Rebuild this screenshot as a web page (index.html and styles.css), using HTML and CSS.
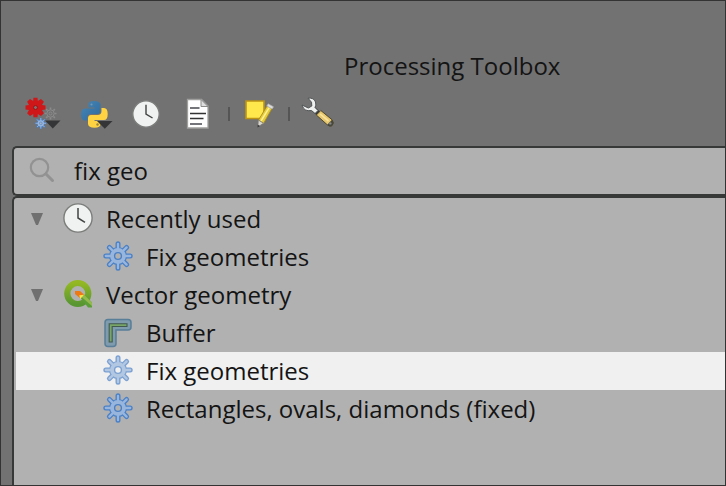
FILE: index.html
```html
<!DOCTYPE html>
<html lang="en">
<head>
<meta charset="utf-8">
<title>Processing Toolbox</title>
<link rel="stylesheet" href="styles.css">
</head>
<body>
<svg class="defs" aria-hidden="true">
  <defs>
    <linearGradient id="qgreen" x1="0" y1="0" x2="0" y2="1"><stop offset="0" stop-color="#93b823"/><stop offset="1" stop-color="#589632"/></linearGradient>
    <linearGradient id="pyblue" x1="0" y1="0" x2="1" y2="1"><stop offset="0" stop-color="#4687b8"/><stop offset="1" stop-color="#30699b"/></linearGradient>
    <path id="teeth" d="M0-12.2V12.2M-12.2 0H12.2M-8.6-8.6L8.6 8.6M-8.6 8.6L8.6-8.6"/>
    <symbol id="gear" viewBox="-15 -15 30 30">
      <g fill="none" stroke-linecap="round">
        <use href="#teeth" stroke="#4b80c6" stroke-width="5"/>
        <circle r="9.1" fill="#4b80c6"/>
        <use href="#teeth" stroke="#98b6dd" stroke-width="2.3"/>
      </g>
      <circle r="7.9" fill="#98b6dd"/>
      <circle r="3.4" fill="currentColor" stroke="#4b80c6" stroke-width="1.4"/>
    </symbol>
    <symbol id="clock" viewBox="0 0 30 30">
      <circle cx="15" cy="15" r="14.1" fill="#f0f2f1" stroke="#7b7d7b" stroke-width="1.4"/>
      <path d="M15 5V15L22 19.3" fill="none" stroke="#414443" stroke-width="1.5"/>
    </symbol>
  </defs>
</svg>
<main class="panel">
  <h1 class="title">Processing Toolbox</h1>
  <div class="toolbar">
    <svg class="models" viewBox="0 0 36 34">
      <g transform="translate(10.5 10.5)">
        <path d="M-2-9.8H2L2.3-6.5L5.5-8.6L8.4-5.7L6.5-2.5L10-2V2L6.5 2.5L8.4 5.7L5.5 8.6L2.3 6.5L2 9.8H-2L-2.3 6.5L-5.5 8.6L-8.4 5.7L-6.5 2.5L-10 2V-2L-6.5-2.5L-8.4-5.7L-5.5-8.6L-2.3-6.5Z" fill="#cf1619"/>
        <circle r="2" fill="#82706f" stroke="#a30f12"/>
      </g>
      <g transform="translate(25.5 16.5)" fill="none" stroke="#8b8b8b">
        <path d="M0-6V-4M0 4V6M-6 0H-4M4 0H6M-4.4-4.4L-3-3M3 3L4.4 4.4M-4.4 4.4L-3 3M3-3L4.4-4.4" stroke-width="1.6"/>
        <circle r="3.7"/><circle r="1.5"/>
      </g>
      <g transform="translate(15.8 26.3) scale(.4)"><use href="#gear" x="-15" y="-15" width="30" height="30"/></g>
      <path d="M20 23.5H35.5L27.8 31.5Z" fill="#343536"/>
    </svg>
    <svg class="python" viewBox="0 0 34 34">
      <path d="M8.5 8V4Q8.5 1 14 1T20.5 4V11Q20.5 14 17.5 14H11Q7.5 14 7.5 17.5V20.5H5Q1 20.5 1 14.5Q1 8.5 5 8.5H14.5V7.5H8.5Z" fill="url(#pyblue)"/>
      <circle cx="11.5" cy="4.5" r="1.1" fill="#7498b5"/>
      <path d="M20.5 21V24Q20.5 27.8 14.5 27.8T8 24V18.5Q8 15 11 15H17.5Q21.5 15 21.5 11V8H24Q27.7 8 27.7 14Q27.7 20 24 20H14.5V21Z" fill="#ffd342"/>
      <circle cx="17.5" cy="24.5" r="1.2" fill="#9b8540"/>
      <path d="M17 21H32.5L24.8 28.7Z" fill="#343536"/>
    </svg>
    <svg class="history"><use href="#clock"/></svg>
    <svg class="document" viewBox="0 0 24 32">
      <path d="M1.5 1.5H15.5L22 8V30H1.5Z" fill="#fff" stroke="#a0a19f" stroke-width="1.3"/>
      <path d="M15 1.5V8.5H22Z" fill="#ddd" stroke="#8b8c8a"/>
      <path d="M4 10H13.5M4 26H16" stroke="#73757a" stroke-width="2"/>
      <path d="M4 15.5H20M4 20.5H17.5" stroke="#333" stroke-width="1.4"/>
    </svg>
    <i class="separator"></i>
    <svg class="edit" viewBox="0 0 30 32">
      <path d="M2 3H20V20.5H2Z" fill="#fee84c" stroke="#bd9414" stroke-width="1.6"/>
      <path d="M14.5 22L23 8L28 10.5L19.5 25.5Z" fill="#e5cc3c" stroke="#a88a22" stroke-width=".9"/>
      <path d="M17 23L25.5 9.2" stroke="#fff195" stroke-width="1.5"/>
      <path d="M14.3 22L19.5 25.2L13.9 29Z" fill="#d8d5cb" stroke="#777" stroke-width=".7"/>
      <path d="M13.5 29.5L13.7 26.7L16 28Z" fill="#333"/>
      <path d="M22.8 8L24.2 5.8L29.5 8.8L28.1 11Z" fill="#ddd" stroke="#aaa" stroke-width=".7"/>
    </svg>
    <i class="separator second"></i>
    <svg class="wrench" viewBox="0 0 34 32">
      <path d="M12.5 12L18 17" stroke="#34383a" stroke-width="5"/>
      <path d="M7 1.2Q13 .5 14.5 5Q15.5 8.5 14 10.5L17 13.5L14 16.5L10.5 13.5Q3 15 1 8L7.3 11L10.8 9L10.5 5.2Z" fill="#eef0f0" stroke="#505354" stroke-width="1"/>
      <path d="M15.3 18L19.8 13.5L31 22.7Q34 26 31 28.8Q29 30.2 26.5 28Z" fill="#e8c86e" stroke="#4e4832" stroke-width="1"/>
      <path d="M19 16.8L27.5 24" stroke="#f8e39d" stroke-width="1.7"/>
      <path d="M26.2 27.8L31 22.7Q34 26 31 28.8Q29 30.2 26.2 27.8Z" fill="#46483e"/>
      <circle cx="29.3" cy="26.4" r="1.2" fill="#888"/>
    </svg>
  </div>
  <div class="search">
    <svg class="lens" viewBox="0 0 26 26"><circle cx="10.5" cy="10.5" r="8.7"/><path d="M17 17L23.5 23.5"/></svg>
    <span>fix geo</span>
  </div>
  <div class="tree">
    <div class="row group"><i class="arrow"></i><svg class="icon"><use href="#clock"/></svg><span>Recently used</span></div>
    <div class="row"><svg class="icon gear"><use href="#gear"/></svg><span>Fix geometries</span></div>
    <div class="row group"><i class="arrow"></i>
      <svg class="icon" viewBox="0 0 30 30">
        <circle cx="14.8" cy="14.5" r="10.5" fill="none" stroke="url(#qgreen)" stroke-width="6.2"/>
        <path d="M17 18L21 15.5L29 23.5V28.5H25Z" fill="#5b9e37"/>
        <path d="M18 17.5L21 15.5L29 23.5V27Z" fill="#94b94d"/>
        <path d="M12 12H17L21 15.5L17 19L12 15Z" fill="#ee7913"/>
        <path d="M16.3 16.2L21 15.7L17.3 20Z" fill="#f6e64b"/>
      </svg><span>Vector geometry</span></div>
    <div class="row"><svg class="icon buffer" viewBox="0 0 30 30" fill="none">
        <path d="M8 1.5H25Q28 1.5 28 4.5V9Q28 12 25 12H13V25.5Q13 28.5 10 28.5H5Q2 28.5 2 25.5V4.5Q2 1.5 5 1.5Z" fill="#7f9bae" stroke="#587e98" stroke-width="1.5"/>
        <path d="M6.2 24V5.8H24V8.5H9.2V24Z" fill="#78a568" stroke="#425950" stroke-width="1.1"/>
      </svg><span>Buffer</span></div>
    <div class="row selected"><svg class="icon gear"><use href="#gear"/></svg><span>Fix geometries</span></div>
    <div class="row"><svg class="icon gear"><use href="#gear"/></svg><span>Rectangles, ovals, diamonds (fixed)</span></div>
  </div>
</main>
</body>
</html>
```

FILE: styles.css
```css
* { box-sizing: border-box; }
body { margin: 0; overflow: hidden; }
.defs { position: absolute; width: 0; height: 0; }
.panel {
  display: flex; flex-direction: column;
  width: 726px; height: 486px; overflow: hidden;
  padding: 49px 0 0 11px;
  border: 1px solid #333;
  background: #727272; color: #141414;
  font: 24px/34px "Open Sans", "Noto Sans", sans-serif;
}
.title { height: 34px; margin: 0 0 0 332px; font: inherit; line-height: 32px; white-space: nowrap; }
.toolbar { display: flex; height: 62px; padding: 12px 0 0 13px; align-items: flex-start; }
.toolbar svg { flex: none; margin-top: 1px; }
.models { width: 36px; height: 34px; color: #a5b2c2; }
.python { width: 34px; height: 34px; margin-left: 19px; }
.toolbar .python { margin-top: 4px; }
.history { width: 28px; height: 28px; margin-left: 18px; }
.toolbar .history { margin-top: 4px; }
.document { width: 24px; height: 32px; margin-left: 26px; }
.toolbar .document { margin-top: 2px; }
.separator { flex: none; width: 2px; height: 14px; margin: 11px 0 0 18px; background: #555; }
.edit { width: 30px; height: 32px; margin-left: 14px; }
.toolbar .edit { margin-top: 2px; }
.separator.second { margin-left: 14px; }
.wrench { width: 34px; height: 32px; margin-left: 11px; }
.search {
  display: flex; flex: none; align-items: center; height: 50px;
  padding-left: 16px; border: 2px solid #373838; border-right: 0;
  border-radius: 5px 0 0 5px; background: #b1b1b1;
}
.lens { width: 26px; height: 26px; margin: -2px 18px 0 -1px; fill: none; stroke: #929292; stroke-width: 2.2; }
.search span { margin-left: 1px; }
.lens path { stroke-width: 3; stroke-linecap: round; }
.tree {
  flex: 1; padding: 2px 0 0 2px; border: 2px solid #373838;
  border-width: 2px 0 0 2px; border-radius: 5px 0 0; background: #b1b1b1;
}
.row { display: flex; align-items: center; height: 38px; padding-left: 87px; white-space: nowrap; }
.row.group { padding-left: 15px; }
.row.selected { background: #f0f0f0; }
.selected .icon { opacity: .7; }
.arrow { width: 12px; height: 12px; margin-right: 20px; background: #707070; clip-path: polygon(0 0, 100% 0, 58% 100%, 42% 100%); }
.icon { flex: none; width: 30px; height: 30px; margin: -2px 13px 0 0; }
.gear { color: #b1b1b1; }
.selected .gear { color: #f0f0f0; }
.icon.buffer { margin-top: -1px; }
```
